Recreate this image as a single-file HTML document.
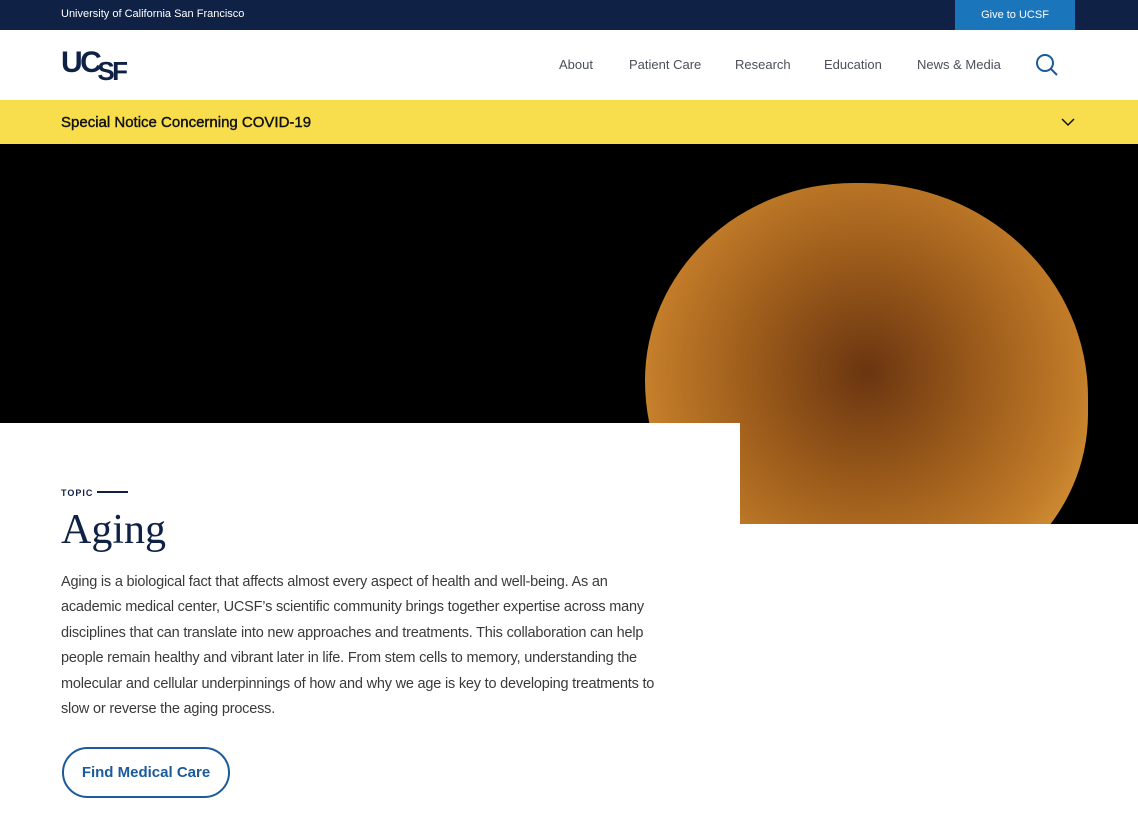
<!DOCTYPE html>
<html><head><meta charset="utf-8"><style>
*{margin:0;padding:0;box-sizing:border-box}
body{width:1138px;height:810px;overflow:hidden;background:#fff;font-family:"Liberation Sans",sans-serif;position:relative}
.top{position:absolute;left:0;top:0;width:1138px;height:30px;background:#0f2145}
.top span{position:absolute;left:61px;top:8px;color:#fff;font-size:11px}
.give{position:absolute;left:955px;top:0;width:120px;height:30px;background:#1b75bb;color:#fff;font-size:11px;text-align:center;line-height:31px}
.logo{position:absolute;left:61px;top:46px;color:#0f2145;font-weight:bold;letter-spacing:-2.5px}
.nav{position:absolute;top:57px;font-size:13px;color:#4a4f5a}
.notice{position:absolute;left:0;top:100px;width:1138px;height:44px;background:#f8dd4c}
.notice span{position:absolute;left:61px;top:14px;font-size:15px;color:#111;-webkit-text-stroke:0.4px #111}
.hero{position:absolute;left:0;top:144px;width:1138px;height:380px;background:#000;overflow:hidden}
.cell{position:absolute;left:645px;top:39px;width:443px;height:420px;border-radius:48% 52% 46% 54%;background:radial-gradient(circle at 50% 45%,#6a3510 0%,#9a5a1a 35%,#c07a28 65%,#e0a040 88%,#f0c060 96%,#f5d070 100%)}
.white{position:absolute;left:0;top:423px;width:740px;height:400px;background:#fff}
.topic{position:absolute;left:61px;top:488px;font-size:9px;font-weight:bold;letter-spacing:1px;color:#0f2145}
.topic:after{content:"";display:inline-block;width:31px;height:2px;background:#0f2145;margin-left:4px;vertical-align:3px}
h1{position:absolute;left:61px;top:506px;font-family:"Liberation Serif",serif;font-weight:normal;font-size:42px;color:#0f2145}
p{position:absolute;left:61px;top:570px;width:610px;font-size:14.5px;line-height:25.4px;color:#3a3a3a;letter-spacing:-0.2px}
.btn{position:absolute;left:62px;top:747px;width:168px;height:51px;border:2px solid #1b5a9b;border-radius:26px;color:#1b5a9b;font-size:15px;font-weight:bold;text-align:center;line-height:47px}
</style></head><body>
<div class="top"><span>University of California San Francisco</span><div class="give">Give to UCSF</div></div>
<div class="logo"><span style="font-size:30px">UC</span><span style="font-size:26px;position:relative;top:8px;margin-left:-2px">SF</span></div>
<div class="nav" style="left:559px">About</div>
<div class="nav" style="left:629px">Patient Care</div>
<div class="nav" style="left:735px">Research</div>
<div class="nav" style="left:824px">Education</div>
<div class="nav" style="left:917px">News &amp; Media</div>
<svg style="position:absolute;left:1035px;top:53px" width="24" height="24" viewBox="0 0 24 24"><circle cx="10" cy="10" r="8" fill="none" stroke="#1b5a9b" stroke-width="2"/><line x1="16" y1="16" x2="22" y2="22" stroke="#1b5a9b" stroke-width="2"/></svg>
<div class="notice"><span>Special Notice Concerning COVID-19</span>
<svg style="position:absolute;left:1061px;top:18px" width="14" height="9" viewBox="0 0 14 9"><polyline points="1,1 7,7 13,1" fill="none" stroke="#111" stroke-width="1.5"/></svg></div>
<div class="hero"><div class="cell"></div></div>
<div class="white"></div>
<div class="topic">TOPIC</div>
<h1>Aging</h1>
<p>Aging is a biological fact that affects almost every aspect of health and well-being. As an academic medical center, UCSF’s scientific community brings together expertise across many disciplines that can translate into new approaches and treatments. This collaboration can help people remain healthy and vibrant later in life. From stem cells to memory, understanding the molecular and cellular underpinnings of how and why we age is key to developing treatments to slow or reverse the aging process.</p>
<div class="btn">Find Medical Care</div>
</body></html>
